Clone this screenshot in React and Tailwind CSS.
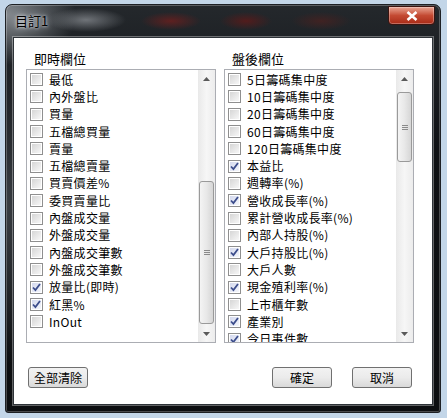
import React from 'react';

const leftItems = [
  ['最低', false],
  ['內外盤比', false],
  ['買量', false],
  ['五檔總買量', false],
  ['賣量', false],
  ['五檔總賣量', false],
  ['買賣價差%', false],
  ['委買賣量比', false],
  ['內盤成交量', false],
  ['外盤成交量', false],
  ['內盤成交筆數', false],
  ['外盤成交筆數', false],
  ['放量比(即時)', true],
  ['紅黑%', true],
  ['InOut', false],
];

const rightItems = [
  ['5日籌碼集中度', false],
  ['10日籌碼集中度', false],
  ['20日籌碼集中度', false],
  ['60日籌碼集中度', false],
  ['120日籌碼集中度', false],
  ['本益比', true],
  ['週轉率(%)', false],
  ['營收成長率(%)', true],
  ['累計營收成長率(%)', false],
  ['內部人持股(%)', false],
  ['大戶持股比(%)', true],
  ['大戶人數', false],
  ['現金殖利率(%)', true],
  ['上市櫃年數', false],
  ['產業別', true],
  ['今日事件數', true],
];

const CheckBox = ({ checked }) => (
  <div className="w-[13px] h-[13px] border border-[#8f8f8f] bg-white p-[1px] shrink-0">
    <div
      className={
        checked
          ? 'w-full h-full bg-gradient-to-br from-[#d4d9ee] to-[#f4f6fb] flex items-center justify-center'
          : 'w-full h-full bg-gradient-to-br from-[#d6d6d6] to-[#f7f7f7]'
      }
    >
      {checked && (
        <svg width="9" height="9" viewBox="0 0 9 9">
          <path d="M1 4.5 L3.4 7 L8 1" fill="none" stroke="#3c4d8c" strokeWidth="1.8" />
        </svg>
      )}
    </div>
  </div>
);

const Arrow = ({ up }) => (
  <div className="h-[17px] flex items-center justify-center">
    <svg width="7" height="4" viewBox="0 0 7 4">
      <path d={up ? 'M0 4 L3.5 0 L7 4 Z' : 'M0 0 L3.5 4 L7 0 Z'} fill="#5a5a5a" />
    </svg>
  </div>
);

const ScrollBar = ({ top, height }) => (
  <div className="w-[17px] shrink-0 flex flex-col bg-gradient-to-r from-[#e9e9e9] via-[#f6f6f6] to-[#ececec]">
    <Arrow up />
    <div className="flex-1 px-[1px]">
      <div
        className="rounded-[3px] border border-[#9a9a9a] bg-gradient-to-r from-[#f4f4f4] via-[#e8e8e8] to-[#d6d6d6] flex items-center justify-center"
        style={{ marginTop: top, height }}
      >
        <div className="flex flex-col gap-[1px]">
          <div className="w-[6px] h-[1px] bg-[#8a8a8a]" />
          <div className="w-[6px] h-[1px] bg-[#8a8a8a]" />
          <div className="w-[6px] h-[1px] bg-[#8a8a8a]" />
        </div>
      </div>
    </div>
    <Arrow />
  </div>
);

const ListBox = ({ items, thumbTop, thumbHeight }) => (
  <div className="w-[190px] h-[274px] border border-[#abadb3] flex bg-white">
    <div className="flex-1 overflow-hidden pt-[1px]">
      {items.map(([label, checked]) => (
        <div key={label} className="h-[17.3px] flex items-center pl-[3px] gap-[6px]">
          <CheckBox checked={checked} />
          <span className="text-[12px] leading-none text-black whitespace-nowrap tracking-[0.3px]">{label}</span>
        </div>
      ))}
    </div>
    <ScrollBar top={thumbTop} height={thumbHeight} />
  </div>
);

const Button = ({ children, className = '' }) => (
  <button
    className={
      'h-[21px] w-[60px] rounded-[3px] border border-[#707070] bg-gradient-to-b from-[#f2f2f2] via-[#ebebeb] to-[#d9d9d9] text-[12px] text-black flex items-center justify-center ' +
      className
    }
  >
    {children}
  </button>
);

export default function App() {
  return (
    <div
      className="w-[447px] h-[418px] bg-[#c3d6e8] pt-[4px] pl-[5px] pr-[6px] pb-[5px]"
      style={{ fontFamily: '"Noto Sans CJK TC", "Liberation Sans", sans-serif' }}
    >
      <div className="h-full rounded-t-[7px] rounded-b-[3px] border border-[#1d2024] flex flex-col bg-[radial-gradient(ellipse_40px_12px_at_80px_15px,#6f7378,transparent),radial-gradient(ellipse_30px_9px_at_165px_16px,#5e2020,transparent),radial-gradient(ellipse_26px_9px_at_240px_16px,#521c1c,transparent),radial-gradient(ellipse_30px_9px_at_315px_16px,#402222,transparent),radial-gradient(ellipse_70px_50px_at_0px_10px,#868b90,transparent),radial-gradient(ellipse_30px_160px_at_0px_200px,#3c4146,transparent),linear-gradient(#24282c,#0f1114_35%,#0c0e10)] shadow-[inset_0_0_0_1px_rgba(255,255,255,0.25)]">
        <div className="h-[32px] flex items-start justify-between pl-[9px] pr-[5px]">
          <span className="mt-[6px] text-[13px] text-black [text-shadow:0_0_6px_#e8eef4,0_0_3px_#e8eef4]">目訂1</span>
          <div className="mt-[1px] w-[47px] h-[19px] rounded-b-[4px] border border-[#3a1410] bg-gradient-to-b from-[#e8a493] via-[#c44a33] to-[#a92a16] flex items-center justify-center shadow-[inset_0_0_0_1px_rgba(255,255,255,0.3)]">
            <svg width="12" height="10" viewBox="0 0 12 10">
              <path d="M1.5 1 L10.5 9 M10.5 1 L1.5 9" stroke="#fff" strokeWidth="2.6" />
            </svg>
          </div>
        </div>
        <div className="flex-1 mx-[7px] mb-[7px] border border-[#2e3338] shadow-[0_0_0_1px_rgba(255,255,255,0.35)] bg-white">
          <div className="h-full flex flex-col px-[12px] pt-[13px]">
            <div className="flex gap-[8px]">
              <div className="w-[190px] pl-[8px] text-[13px] leading-[16px] text-black">即時欄位</div>
              <div className="w-[190px] pl-[8px] text-[13px] leading-[16px] text-black">盤後欄位</div>
            </div>
            <div className="flex gap-[8px] mt-[2px]">
              <ListBox items={leftItems} thumbTop={94} thumbHeight={143} />
              <ListBox items={rightItems} thumbTop={5} thumbHeight={70} />
            </div>
            <div className="w-[388px] h-[1px] bg-[#a0a0a0] mt-[11px] border-b border-white" />
            <div className="w-[388px] flex items-center mt-[12px] pl-[2px] pr-[2px]">
              <Button>全部清除</Button>
              <div className="flex-1" />
              <Button>確定</Button>
              <Button className="ml-[20px]">取消</Button>
            </div>
          </div>
        </div>
      </div>
    </div>
  );
}
